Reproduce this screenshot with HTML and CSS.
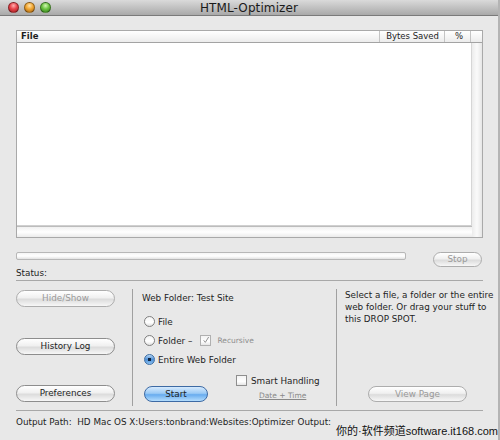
FILE: index.html
```html
<!DOCTYPE html>
<html>
<head>
<meta charset="utf-8">
<link rel="stylesheet" href="styles.css">
</head>
<body>
<div class="window">
  <div class="titlebar">
    <div class="lights">
      <span class="light red"></span>
      <span class="light orange"></span>
      <span class="light green"></span>
    </div>
    <div class="title">HTML-Optimizer</div>
  </div>
  <div class="content">
    <div class="table">
      <div class="thead">
        <div class="th th-file">File</div>
        <div class="th th-bytes">Bytes Saved</div>
        <div class="th th-pct">%</div>
        <div class="th th-corner"></div>
      </div>
      <div class="tbody">
        <div class="tmain">
          <div class="rows"></div>
          <div class="hscroll"></div>
        </div>
        <div class="vscroll"></div>
      </div>
    </div>
    <div class="progress-row">
      <div class="progress"></div>
      <button class="btn btn-stop disabled">Stop</button>
    </div>
    <div class="status">Status:</div>
    <div class="panel">
      <div class="col-buttons">
        <button class="btn btn-wide disabled">Hide/Show</button>
        <button class="btn btn-wide">History Log</button>
        <button class="btn btn-wide">Preferences</button>
      </div>
      <div class="col-options">
        <div class="webfolder">Web Folder: Test Site</div>
        <div class="radios">
          <label class="radio-row"><span class="radio"></span>File</label>
          <label class="radio-row"><span class="radio"></span>Folder –<span class="check checked"><svg viewBox="0 0 12 12" width="12" height="12"><path d="M2.5 6.5 L5 9.5 L10 1.5" fill="none" stroke="#8a8a8a" stroke-width="1.4"/></svg></span><span class="recursive">Recursive</span></label>
          <label class="radio-row"><span class="radio on"></span>Entire Web Folder</label>
        </div>
        <div class="start-row">
          <button class="btn btn-start">Start</button>
          <div class="smart">
            <label class="smart-row"><span class="check"></span>Smart Handling</label>
            <span class="datetime">Date + Time</span>
          </div>
        </div>
      </div>
      <div class="col-drop">
        <p class="drop-text">Select a file, a folder or the entire<br>web folder. Or drag your stuff to<br>this DROP SPOT.</p>
        <button class="btn btn-view disabled">View Page</button>
      </div>
    </div>
    <div class="output">Output Path: &nbsp;HD Mac OS X:Users:tonbrand:Websites:Optimizer Output:</div>
  </div>
  <div class="watermark">你的·软件频道software.it168.com</div>
</div>
</body>
</html>
```
FILE: styles.css
```css
* { box-sizing: border-box; }
html, body { margin: 0; padding: 0; background: #e8e8e8; }
body { font-family: "DejaVu Sans", "Liberation Sans", sans-serif; font-size: 8.8px; color: #1e1e1e; }
.window {
  position: relative;
  width: 500px; height: 440px;
  background: #e8e8e8;
  border-right: 2px solid #b4b4b4;
  overflow: hidden;
}
.titlebar {
  position: relative;
  height: 16px;
  background: linear-gradient(#dadada, #a9a9a9);
  border-bottom: 1px solid #7a7a7a;
  display: flex; align-items: center; justify-content: center;
}
.lights { position: absolute; left: 8px; top: 2px; display: flex; gap: 5px; }
.light { width: 11px; height: 11px; border-radius: 50%; border: 1px solid rgba(0,0,0,0.35); }
.red { background: radial-gradient(circle at 50% 30%, #ffb0b0 0, #e8444a 45%, #9c1a1e 100%); }
.orange { background: radial-gradient(circle at 50% 30%, #ffe3a8 0, #f1a632 45%, #a2600e 100%); }
.green { background: radial-gradient(circle at 50% 30%, #d2f7b4 0, #6cc441 45%, #2f7a1a 100%); }
.title { font-size: 12px; color: #1a1a1a; letter-spacing: 0.1px; }
.content { padding: 14px 16px 0 16px; }
.table { width: 467px; height: 208px; border: 1px solid #a9a9a9; display: flex; flex-direction: column; background: #fff; }
.thead { height: 12px; display: flex; background: linear-gradient(#ffffff, #ececec); border-bottom: 1px solid #a3a3a3; font-size: 8.5px; }
.th { line-height: 11px; padding: 0 4px; border-right: 1px solid #c4c4c4; }
.th-file { flex: 1; font-weight: bold; }
.th-bytes { width: 65px; text-align: right; padding-right: 5px; }
.th-pct { width: 26px; text-align: right; padding-right: 7px; }
.th-corner { width: 11px; border-right: none; }
.tbody { flex: 1; display: flex; }
.tmain { flex: 1; display: flex; flex-direction: column; }
.rows { flex: 1; background: #fff; border-right: 1px solid #d6d6d6; box-shadow: inset 0 -1px 0 #d0d0d0; }
.hscroll { height: 11px; background: linear-gradient(#f0f0f0, #ffffff 50%, #ebebeb); border-top: 1px solid #bcbcbc; }
.vscroll { width: 10px; background: linear-gradient(90deg, #ececec, #fafafa 50%, #e6e6e6); }
.progress-row { display: flex; align-items: flex-start; margin-top: 14px; height: 15px; }
.progress { width: 390px; height: 8px; border: 1px solid #b7b7b7; border-radius: 2px; background: linear-gradient(#f4f4f4, #ffffff 50%, #e2e2e2); }
.btn {
  font-family: inherit; font-size: 8.8px; color: #1e1e1e;
  border: 1px solid #8d8d8d; border-radius: 9px;
  background: linear-gradient(#ffffff, #f0f0f0 45%, #dcdcdc 55%, #f7f7f7);
  padding: 0; margin: 0; height: 17px; line-height: 15px; text-align: center;
}
.btn.disabled { color: #9a9a9a; border-color: #adadad; }
.btn-stop { margin-left: auto; width: 49px; height: 15px; line-height: 13px; }
.status { margin-top: 0; line-height: 12px; padding-bottom: 1px; border-bottom: 1px solid #a8a8a8; width: 467px; }
.panel { display: flex; height: 130px; padding-top: 8px; border-bottom: 1px solid #a8a8a8; width: 467px; }
.col-buttons { width: 117px; display: flex; flex-direction: column; justify-content: space-between; padding-top: 1px; padding-bottom: 4px; border-right: 1px solid #a0a0a0; margin-bottom: 4px; }
.btn-wide { width: 99px; }
.col-options { width: 204px; padding-left: 9px; border-right: 1px solid #a0a0a0; margin-bottom: 4px; display: flex; flex-direction: column; }
.webfolder { line-height: 12px; margin-top: 3px; }
.radios { margin-top: 11px; display: flex; flex-direction: column; gap: 6px; }
.radio-row { display: flex; align-items: center; height: 13px; gap: 3px; }
.radio { width: 11px; height: 11px; border-radius: 50%; border: 1px solid #7f7f7f; background: linear-gradient(#f3f3f3, #ffffff 60%, #e0e0e0); position: relative; margin-left: 2px; }
.radio.on { background: radial-gradient(circle, #10233c 0 1.5px, transparent 2px), linear-gradient(#b9d8f6, #4d8fd6 50%, #8bc1f2); border-color: #3e6ea3; }
.check { width: 11px; height: 11px; border: 1px solid #8e8e8e; background: linear-gradient(#f3f3f3, #ffffff 60%, #e5e5e5); display: inline-flex; align-items: center; justify-content: center; margin-left: 5px; }
.check.checked { border-color: #b0b0b0; }
.check svg { margin-top: -2px; margin-left: 1px; }
.recursive { font-size: 7.5px; color: #8e8e8e; margin-left: 3px; }
.start-row { display: flex; margin-top: 8px; }
.btn-start { width: 64px; height: 16px; margin-top: 12px; margin-left: 2px; border-color: #3d6aa4; line-height: 14px; background: linear-gradient(#d6eafe, #9bcaf5 45%, #68acef 55%, #b4ddfd); }
.smart { margin-left: 28px; display: flex; flex-direction: column; align-items: flex-start; }
.smart-row { display: flex; align-items: center; gap: 4px; height: 13px; }
.smart-row .check { margin-left: 0; }
.datetime { margin-left: 23px; margin-top: 4px; color: #888; text-decoration: underline; font-size: 7.5px; }
.col-drop { flex: 1; padding-left: 8px; display: flex; flex-direction: column; min-width: 0; }
.drop-text { margin: 0; line-height: 12px; white-space: nowrap; }
.btn-view { width: 99px; height: 16px; line-height: 14px; margin-top: auto; margin-bottom: 8px; margin-left: 23px; }
.output { margin-top: 5px; line-height: 12px; }
.watermark { position: absolute; right: 0; bottom: 2px; font-family: "Liberation Sans", "Noto Sans CJK SC", sans-serif; font-size: 11px; color: #111; }
```
